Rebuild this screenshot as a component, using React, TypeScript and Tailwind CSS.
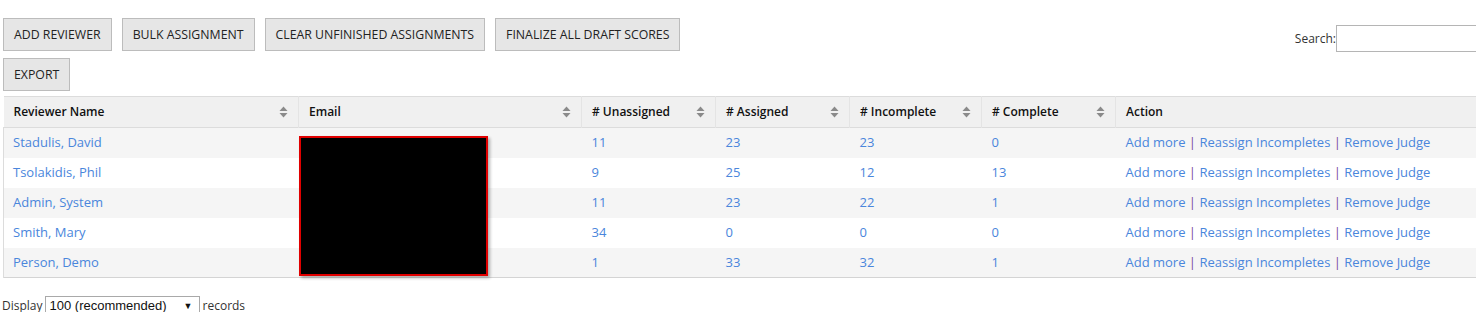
import React from 'react'

const rows = [
  { name: 'Stadulis, David', un: '11', as: '23', inc: '23', comp: '0' },
  { name: 'Tsolakidis, Phil', un: '9', as: '25', inc: '12', comp: '13' },
  { name: 'Admin, System', un: '11', as: '23', inc: '22', comp: '1' },
  { name: 'Smith, Mary', un: '34', as: '0', inc: '0', comp: '0' },
  { name: 'Person, Demo', un: '1', as: '33', inc: '32', comp: '1' },
]

const columns = [
  { label: 'Reviewer Name', w: 'w-[295px]', sort: true },
  { label: 'Email', w: 'w-[283px]', sort: true },
  { label: '# Unassigned', w: 'w-[134px]', sort: true },
  { label: '# Assigned', w: 'w-[134px]', sort: true },
  { label: '# Incomplete', w: 'w-[132px]', sort: true },
  { label: '# Complete', w: 'w-[134px]', sort: true },
  { label: 'Action', w: '', sort: false },
]

function SortIcon() {
  return (
    <svg width="9" height="12" viewBox="0 0 9 12" className="shrink-0">
      <path d="M4.5 0.5 L8.5 5 L0.5 5 Z" fill="#8a8a8a" />
      <path d="M4.5 11.5 L8.5 7 L0.5 7 Z" fill="#8a8a8a" />
    </svg>
  )
}

function Btn({ children }: { children: React.ReactNode }) {
  return (
    <button className="h-[33px] border border-[#bcbcbc] bg-[#e6e6e6] px-[10px] pt-[1px] text-[12.3px] text-[#222] uppercase">
      {children}
    </button>
  )
}

export default function App() {
  return (
    <div className="w-[1476px] overflow-hidden bg-white font-['Open_Sans',sans-serif] text-[13px] text-[#222]">
      <div className="flex items-start justify-between pt-[18px]">
        <div className="flex flex-col gap-[7px] pl-[3px]">
          <div className="flex gap-[10px]">
            <Btn>Add Reviewer</Btn>
            <Btn>Bulk Assignment</Btn>
            <Btn>Clear Unfinished Assignments</Btn>
            <Btn>Finalize All Draft Scores</Btn>
          </div>
          <div className="flex">
            <Btn>Export</Btn>
          </div>
        </div>
        <div className="mt-[7px] mr-[-12px] flex items-center">
          <span className="text-[12px] text-[#333]">Search:</span>
          <input className="h-[27px] w-[152px] border border-[#b5b5b5] bg-white" />
        </div>
      </div>

      <div className="mt-[5px] pl-[3px]">
        <table className="w-[1480px] table-fixed border-collapse">
          <thead>
            <tr className="h-[31px] border-t border-b border-[#dcdcdc] bg-[#f0f0f0]">
              {columns.map((c, i) => (
                <th
                  key={c.label}
                  className={`${c.w} ${i < columns.length - 1 ? 'border-r border-[#e4e4e4]' : ''} px-[10px] text-left text-[12px] font-semibold text-[#111]`}
                >
                  <div className="flex items-center justify-between">
                    <span>{c.label}</span>
                    {c.sort && <SortIcon />}
                  </div>
                </th>
              ))}
            </tr>
          </thead>
          <tbody>
            {rows.map((r, i) => (
              <tr
                key={r.name}
                className={`h-[30px] ${i % 2 === 0 ? 'bg-[#f5f5f5]' : 'bg-white'} ${i === rows.length - 1 ? 'border-b border-[#d4d4d4]' : ''}`}
              >
                <td className="border-l border-[#dcdcdc] px-[9px] text-[#4a86dc]">{r.name}</td>
                <td className="relative px-[10px]">
                  {i === 0 && (
                    <div className="absolute top-[8px] left-0 z-10 h-[140px] w-[189px] border-2 border-[#e00000] bg-black shadow-[2px_2px_3px_rgba(0,0,0,0.3)]" />
                  )}
                </td>
                <td className="px-[10px] text-[#4a86dc]">{r.un}</td>
                <td className="px-[10px] text-[#4a86dc]">{r.as}</td>
                <td className="px-[10px] text-[#4a86dc]">{r.inc}</td>
                <td className="px-[10px] text-[#4a86dc]">{r.comp}</td>
                <td className="px-[10px] whitespace-nowrap">
                  <span className="text-[#4a86dc]">Add more</span>
                  <span className="text-[#7a4a9a]"> | </span>
                  <span className="text-[#4a86dc]">Reassign Incompletes</span>
                  <span className="text-[#7a4a9a]"> | </span>
                  <span className="text-[#4a86dc]">Remove Judge</span>
                </td>
              </tr>
            ))}
          </tbody>
        </table>
      </div>

      <div className="mt-[18px] flex items-center pl-[2px] text-[12px] leading-[16px] text-[#333]">
        <span>Display</span>
        <div className="ml-[2px] flex h-[19px] w-[155px] items-center justify-between border border-[#a9a9a9] bg-white pr-[6px] pl-[4px] font-['Liberation_Sans',sans-serif] text-[13px] text-[#111]">
          <span>100 (recommended)</span>
          <span className="text-[9px]">▼</span>
        </div>
        <span className="ml-[3px]">records</span>
      </div>
    </div>
  )
}
